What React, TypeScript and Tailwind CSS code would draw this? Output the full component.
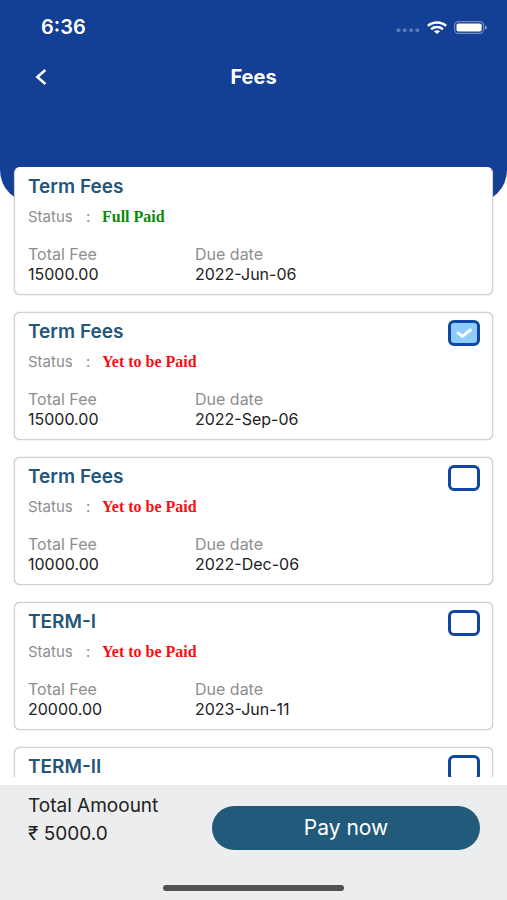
import { useState } from "react";

type Fee = {
  id: number;
  title: string;
  details?: { paid: boolean; total: string; due: string };
};

const FEES: Fee[] = [
  { id: 1, title: "Term Fees", details: { paid: true, total: "15000.00", due: "2022-Jun-06" } },
  { id: 2, title: "Term Fees", details: { paid: false, total: "15000.00", due: "2022-Sep-06" } },
  { id: 3, title: "Term Fees", details: { paid: false, total: "10000.00", due: "2022-Dec-06" } },
  { id: 4, title: "TERM-I", details: { paid: false, total: "20000.00", due: "2023-Jun-11" } },
  { id: 5, title: "TERM-II" },
];

export default function App() {
  const [selected, setSelected] = useState<number[]>([2]);

  const toggle = (id: number) =>
    setSelected((ids) => (ids.includes(id) ? ids.filter((i) => i !== id) : [...ids, id]));

  return (
    <div className="flex h-dvh flex-col overflow-hidden bg-white font-['Inter','Liberation_Sans',sans-serif] text-[#222]">
      <header className="-mb-9 h-[203px] shrink-0 rounded-b-[33px] bg-[#134094] text-white">
        <StatusBar />
        <div className="grid h-[46px] grid-cols-[50px_1fr_50px] items-center px-4">
          <button type="button" aria-label="Back" className="flex h-10 items-center justify-center">
            <svg viewBox="0 0 12 16" className="h-4 w-3" fill="none" stroke="currentColor" strokeWidth="2.6">
              <path d="M10.4 1 2.4 8l8 7" />
            </svg>
          </button>
          <h1 className="text-center text-[20px] leading-6 font-bold">Fees</h1>
        </div>
      </header>

      <main className="relative mb-2 min-h-0 flex-1 overflow-y-auto px-[14px] [scrollbar-width:none]">
        <ul className="flex flex-col gap-[17px] pb-4">
          {FEES.map((fee) => (
            <FeeCard
              key={fee.id}
              fee={fee}
              checked={selected.includes(fee.id)}
              onToggle={() => toggle(fee.id)}
            />
          ))}
        </ul>
      </main>

      <footer className="shrink-0 bg-[#ebedee] pb-[9px]">
        <div className="flex items-start pt-[7px] pr-[27px] pl-7">
          <div className="w-[184px] shrink-0 text-[19px] leading-7">
            <p>Total Amoount</p>
            <p>₹ 5000.0</p>
          </div>
          <button
            type="button"
            className="mt-[14px] h-11 flex-1 rounded-full bg-[#215a7b] text-[21px] leading-6 text-white"
          >
            Pay now
          </button>
        </div>
        <div className="mx-auto mt-[35px] h-1.5 w-[181px] rounded-full bg-[#505151]" />
      </footer>
    </div>
  );
}

function StatusBar() {
  return (
    <div className="flex h-[54px] items-center justify-between pr-[19px] pl-[41px]">
      <span className="text-[20px] leading-6 font-semibold">6:36</span>
      <div className="flex items-center gap-[7px]">
        <svg viewBox="0 0 24 14" className="h-[14px] w-6" fill="#fff" fillOpacity="0.3" aria-hidden="true">
          <rect x="0.5" y="8.6" width="4" height="3.4" rx="1.4" />
          <rect x="6.8" y="8.6" width="4" height="3.4" rx="1.4" />
          <rect x="13.1" y="8.6" width="4" height="3.4" rx="1.4" />
          <rect x="19.4" y="8.6" width="4" height="3.4" rx="1.4" />
        </svg>
        <svg viewBox="0 0 20 13" className="h-[13px] w-5" fill="none" stroke="#fff" strokeWidth="2.5" aria-hidden="true">
          <path d="M0.9 4.9C6 0.3 14 0.3 19.1 4.9" />
          <path d="M4.1 8.2c3.3-2.8 8.5-2.8 11.8 0" />
          <path d="M6.9 10.3c1.8-1.5 4.4-1.5 6.2 0L10 13z" fill="#fff" stroke="none" />
        </svg>
        <svg viewBox="0 0 34 13" className="h-[13px] w-[34px]" aria-hidden="true">
          <rect x="0.6" y="0.6" width="29" height="11.8" rx="3.6" fill="none" stroke="#fff" strokeOpacity="0.4" strokeWidth="1.2" />
          <rect x="2.5" y="2.4" width="25.2" height="8.2" rx="1.8" fill="#fff" />
          <path d="M31 4.4c2.6 0.6 2.6 3.6 0 4.2z" fill="#fff" fillOpacity="0.5" />
        </svg>
      </div>
    </div>
  );
}

function FeeCard({ fee, checked, onToggle }: { fee: Fee; checked: boolean; onToggle: () => void }) {
  const inputId = `fee-${fee.id}`;
  const { title, details } = fee;
  const payable = !details?.paid;

  return (
    <li className="flex min-h-32 items-start rounded-md border border-[#d0d0d0] bg-white pt-[7px] pr-3 pb-[10px] pl-[13px] shadow-[0_0_1px_#999] first:border-t-white">
      <div className="min-w-0 flex-1 pt-0.5">
        <h2 className="text-[19px] leading-5 font-semibold text-[#24567a]">
          {payable ? <label htmlFor={inputId}>{title}</label> : title}
        </h2>
        {details && (
          <>
            <div className="mt-[10px] grid grid-cols-[58px_16px_1fr] text-[15px] leading-5">
              <span className="text-[#8e8e8e]">Status</span>
              <span className="text-[#8e8e8e]">:</span>
              <span
                className={
                  details.paid
                    ? "font-['Liberation_Serif',serif] text-[16px] font-bold text-[#0a8a0a]"
                    : "font-['Liberation_Serif',serif] text-[16px] font-bold text-[#fb0d14]"
                }
              >
                {details.paid ? "Full Paid" : "Yet to be Paid"}
              </span>
            </div>
            <dl className="mt-[17px] grid grid-cols-[167px_1fr] text-[16px] leading-5">
              <div>
                <dt className="text-[#8e8e8e]">Total Fee</dt>
                <dd>{details.total}</dd>
              </div>
              <div>
                <dt className="text-[#8e8e8e]">Due date</dt>
                <dd>{details.due}</dd>
              </div>
            </dl>
          </>
        )}
      </div>
      {payable && (
        <div className="relative h-[26px] w-8 shrink-0">
          <input
            id={inputId}
            type="checkbox"
            checked={checked}
            onChange={onToggle}
            className="peer block h-[26px] w-8 appearance-none rounded-md border-[3px] border-[#1147a3] bg-white checked:bg-[#8dcdfb]"
          />
          <svg
            viewBox="0 0 32 26"
            className="pointer-events-none absolute inset-0 hidden peer-checked:block"
            fill="none"
            stroke="#fff"
            strokeWidth="3"
            strokeLinecap="round"
            strokeLinejoin="round"
            aria-hidden="true"
          >
            <path d="m10 12.8 4.4 3.6 8-6.4" />
          </svg>
        </div>
      )}
    </li>
  );
}
